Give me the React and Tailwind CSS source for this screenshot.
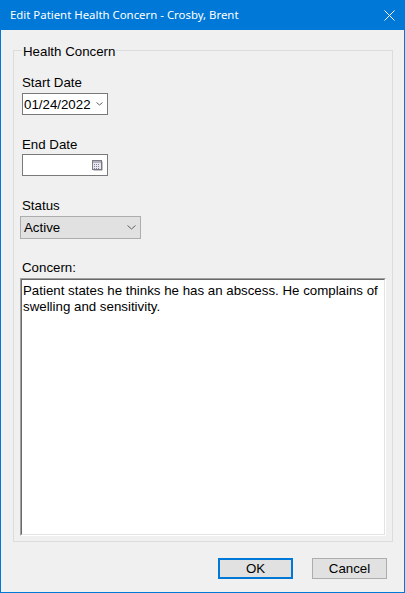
import React from "react";

const sans = { fontFamily: '"Liberation Sans", Arial, sans-serif' };

function Chevron({ w = 7, h = 4, color = "#606060" }) {
  return (
    <svg width={w + 1} height={h + 1} viewBox={`0 0 ${w + 1} ${h + 1}`}>
      <polyline points={`0.5,0.5 ${(w + 1) / 2},${h} ${w + 0.5},0.5`} fill="none" stroke={color} strokeWidth="1" />
    </svg>
  );
}

function CalIcon() {
  return (
    <svg width="11" height="11" viewBox="0 0 11 11">
      <rect x="1.5" y="1.5" width="9" height="9" fill="#8a8a8a" />
      <rect x="0.5" y="0.5" width="9" height="9" fill="#e8e8ee" stroke="#7a7a80" />
      <rect x="1" y="1" width="8" height="2" fill="#b0b0c0" />
      {[2, 4, 6].map((x) =>
        [4, 6, 8].map((y) => <rect key={x + "-" + y} x={x} y={y} width="1" height="1" fill="#8080a0" />)
      )}
    </svg>
  );
}

export default function App() {
  return (
    <div className="w-[405px] h-[593px] flex flex-col bg-[#f0f0f0] text-[13.3px] text-[#000000]" style={sans}>
      <div className="h-[30px] bg-[#0078d7] flex items-center justify-between pl-[10px] pr-[10px] text-white">
        <span className="text-[11.4px] leading-[16px]" style={{ fontFamily: '"Noto Sans", "Open Sans", sans-serif' }}>
          Edit Patient Health Concern - Crosby, Brent
        </span>
        <svg width="11" height="11" viewBox="0 0 11 11">
          <path d="M0.5 0.5 L10.5 10.5 M10.5 0.5 L0.5 10.5" stroke="white" strokeWidth="1" />
        </svg>
      </div>
      <div className="flex-1 flex flex-col border-x border-b border-[#0078d7]">
        <div className="ml-[12px] mt-[20px] w-[380px] h-[492px] border border-[#dcdcdc] flex flex-col">
          <div className="ml-[8px] -mt-[7px] w-fit px-[1px] bg-[#f0f0f0] leading-[15px]">Health Concern</div>
          <div className="pl-[6px] flex flex-col">
            <div className="ml-[2px] mt-[16px] leading-[15px]">Start Date</div>
            <div className="ml-[2px] mt-[3px] w-[86px] h-[22px] bg-white border border-[#7a7a7a] flex items-center justify-between pl-[1px] pr-[4px]">
              <span className="leading-[15px]">01/24/2022</span>
              <Chevron w={6} h={3} />
            </div>
            <div className="ml-[2px] mt-[22px] leading-[15px]">End Date</div>
            <div className="ml-[2px] mt-[2px] w-[86px] h-[22px] bg-white border border-[#7a7a7a] flex items-center justify-end pr-[4px]">
              <CalIcon />
            </div>
            <div className="ml-[2px] mt-[22px] leading-[15px]">Status</div>
            <div className="mt-[3px] w-[121px] h-[23px] bg-[#e1e1e1] border border-[#adadad] flex items-center justify-between pl-[3px] pr-[4px]">
              <span className="leading-[15px]">Active</span>
              <Chevron w={8} h={4} />
            </div>
            <div className="ml-[2px] mt-[21px] leading-[15px]">Concern:</div>
            <div className="mt-[3px] w-[366px] h-[258px] border-t border-l border-[#a0a0a0] border-r-white border-b-white border-r border-b">
              <div className="w-full h-full bg-white border-t border-l border-[#696969] border-r border-b border-r-[#e3e3e3] border-b-[#e3e3e3] pl-[1px] pt-[3px] leading-[16px]">
                Patient states he thinks he has an abscess. He complains of swelling and sensitivity.
              </div>
            </div>
          </div>
        </div>
        <div className="mt-[16px] flex justify-end gap-[19px] pr-[17px]">
          <button className="w-[75px] h-[21px] bg-[#e1e1e1] border-2 border-[#0078d7] flex items-center justify-center leading-[15px]" style={sans}>
            OK
          </button>
          <button className="w-[75px] h-[21px] bg-[#e1e1e1] border border-[#adadad] flex items-center justify-center leading-[15px]" style={sans}>
            Cancel
          </button>
        </div>
      </div>
    </div>
  );
}
